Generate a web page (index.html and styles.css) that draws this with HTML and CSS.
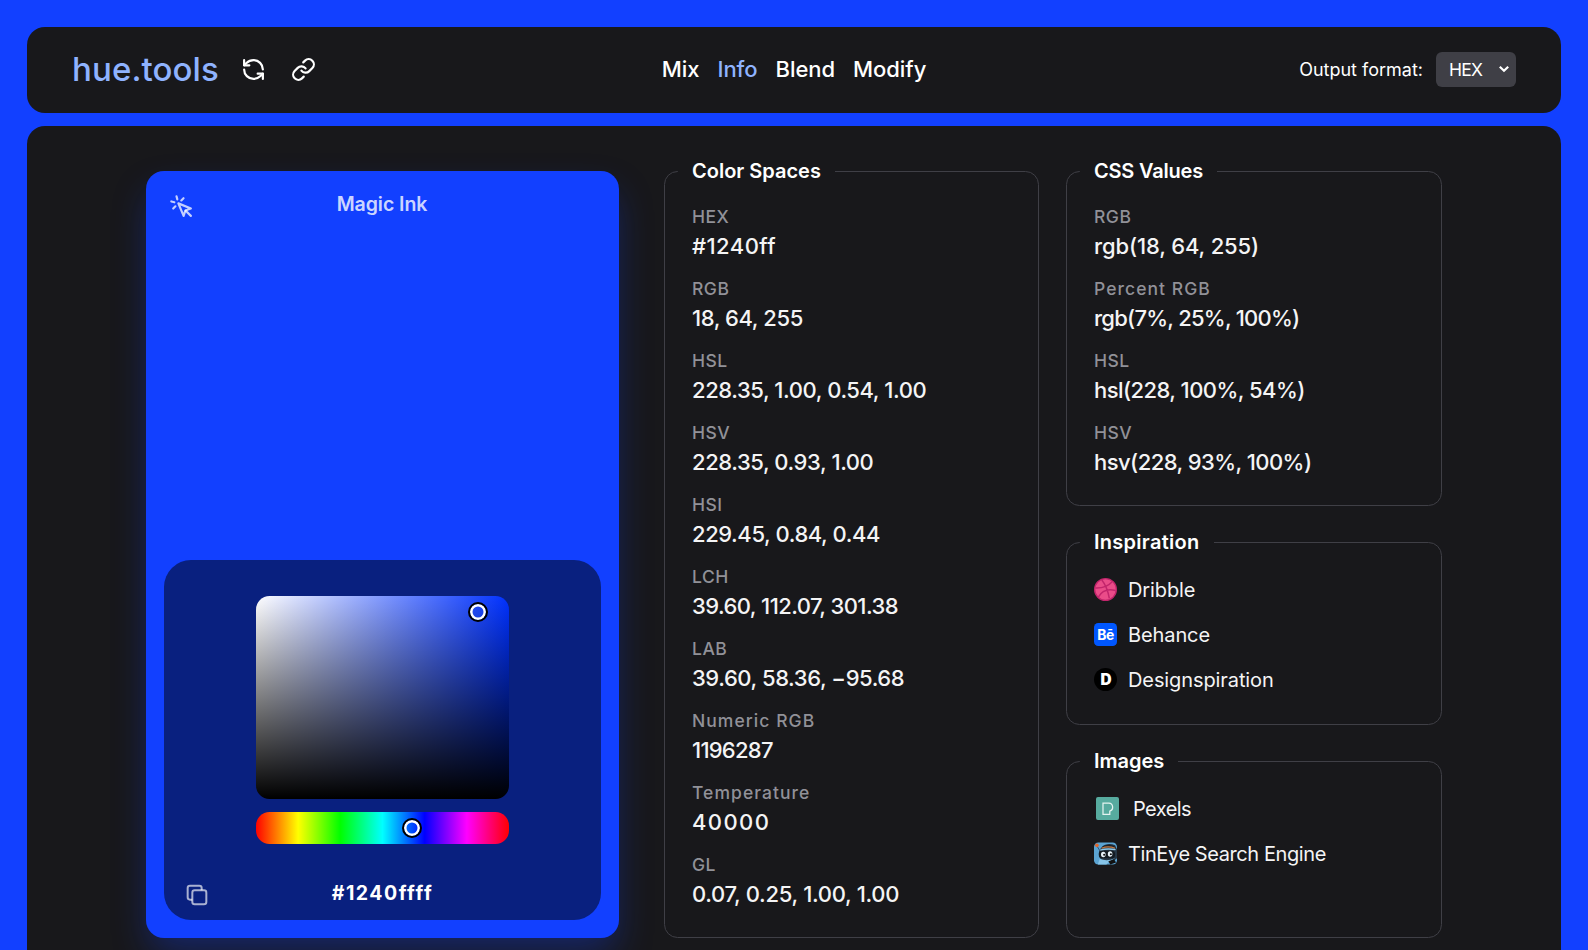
FILE: index.html
```html
<!DOCTYPE html>
<html lang="en">
<head>
    <meta charset="UTF-8">
    <meta name="viewport" content="width=device-width, initial-scale=1.0">
    <title>hue.tools - Info</title>
    <link rel="stylesheet" href="styles.css">
</head>
<body>

    <header class="topbar">
        <div class="brand">
            <a class="logo">hue.tools</a>
            <svg class="icon" viewBox="0 0 24 24"><path d="M21 12a9 9 0 0 0-9-9 9.75 9.75 0 0 0-6.74 2.74L3 8"/><path d="M3 3v5h5"/><path d="M3 12a9 9 0 0 0 9 9 9.75 9.75 0 0 0 6.74-2.74L21 16"/><path d="M16 16h5v5"/></svg>
            <svg class="icon" viewBox="0 0 24 24"><path d="M10 13a5 5 0 0 0 7.54.54l3-3a5 5 0 0 0-7.07-7.07l-1.72 1.71"/><path d="M14 11a5 5 0 0 0-7.54-.54l-3 3a5 5 0 0 0 7.07 7.07l1.71-1.71"/></svg>
        </div>
        <nav class="menu">
            <a>Mix</a>
            <a class="active">Info</a>
            <a>Blend</a>
            <a>Modify</a>
        </nav>
        <div class="format">
            <label for="format">Output format:</label>
            <div class="select">
                <select id="format">
                    <option>HEX</option>
                    <option>RGB</option>
                    <option>HSL</option>
                </select>
                <svg viewBox="0 0 12 8"><path d="M1.8 1.8 6 5.8l4.2-4"/></svg>
            </div>
        </div>
    </header>

    <main class="page">
        <section class="swatch">
            <div class="swatch-head">
                <svg class="icon pick" viewBox="0 0 24 24"><path d="m9 9 5 12 1.77-5.23L21 14z"/><path d="m16.07 16.07 4.93 4.93"/><path d="m7.19 2.24.78 2.9"/><path d="m5.14 7.97-2.9-.78"/><path d="m13.95 4.05-2.12 2.12"/><path d="m6.17 11.83-2.12 2.12"/></svg>
                <span>Magic Ink</span>
            </div>
            <div class="picker">
                <div class="shade"><i class="handle"></i></div>
                <div class="hue"><i class="handle"></i></div>
                <div class="picker-foot">
                    <svg class="copy" viewBox="0 0 24 24"><rect x="8" y="8" width="12" height="12" rx="2"/><path d="M16 8V6a2 2 0 0 0-2-2H6a2 2 0 0 0-2 2v8a2 2 0 0 0 2 2h2"/></svg>
                    <span>#1240ffff</span>
                </div>
            </div>
        </section>

        <fieldset class="spaces">
            <legend>Color Spaces</legend>
            <dl>
                <dt>HEX</dt><dd class="wide">#1240ff</dd>
                <dt>RGB</dt><dd>18, 64, 255</dd>
                <dt>HSL</dt><dd>228.35, 1.00, 0.54, 1.00</dd>
                <dt>HSV</dt><dd>228.35, 0.93, 1.00</dd>
                <dt>HSI</dt><dd>229.45, 0.84, 0.44</dd>
                <dt>LCH</dt><dd class="tight">39.60, 112.07, 301.38</dd>
                <dt>LAB</dt><dd>39.60, 58.36, −95.68</dd>
                <dt class="long">Numeric RGB</dt><dd class="tighter">1196287</dd>
                <dt class="long">Temperature</dt><dd class="wider">40000</dd>
                <dt>GL</dt><dd class="gl">0.07, 0.25, 1.00, 1.00</dd>
            </dl>
        </fieldset>

        <div class="side">
            <fieldset>
                <legend class="css-title">CSS Values</legend>
                <dl>
                    <dt>RGB</dt><dd class="rgb">rgb(18, 64, 255)</dd>
                    <dt class="long">Percent RGB</dt><dd class="tighter">rgb(7%, 25%, 100%)</dd>
                    <dt>HSL</dt><dd class="tight">hsl(228, 100%, 54%)</dd>
                    <dt>HSV</dt><dd class="tight">hsv(228, 93%, 100%)</dd>
                </dl>
            </fieldset>

            <fieldset>
                <legend class="insp-title">Inspiration</legend>
                <ul>
                    <li>
                        <svg viewBox="0 0 24 24"><circle cx="12" cy="12" r="11.3" fill="#ea4c89" stroke="#c2256c" stroke-width="1.4"/><path d="M8 1.8c4 5 6.5 11 8 19.5M1.5 10.5c7 .3 13-1.5 17.5-6.5M4.5 20c3.5-6.500 10-9 18-7" fill="none" stroke="#c2256c" stroke-width="1.5"/></svg>
                        <span>Dribble</span>
                    </li>
                    <li>
                        <svg viewBox="0 0 24 24"><rect width="24" height="24" rx="4.5" fill="#0057ff"/><text x="12" y="17.8" text-anchor="middle" class="be">Bē</text></svg>
                        <span>Behance</span>
                    </li>
                    <li>
                        <svg viewBox="0 0 24 24"><circle cx="12" cy="12" r="12" fill="#000"/><text x="12.5" y="17.8" text-anchor="middle" class="dee">D</text></svg>
                        <span>Designspiration</span>
                    </li>
                </ul>
            </fieldset>

            <fieldset class="images">
                <legend>Images</legend>
                <ul>
                    <li class="pexels">
                        <svg viewBox="0 0 24 24"><rect width="24" height="24" rx="2" fill="#57ab9f"/><path d="M7.3 6.500h6.200a4.200 4.200 0 0 1 .9 8.200v3.400H7.300z" fill="none" stroke="#e4f3f0" stroke-width="1.300"/></svg>
                        <span>Pexels</span>
                    </li>
                    <li class="tineye">
                        <svg viewBox="0 0 24 24">
                            <rect y=".5" width="24" height="23" rx="4.5" fill="#5ba4d3"/>
                            <path d="M8 5.5C11 2 17 1 22 3.500l2 4V17l-4 3H9C4 16 4 9 8 5.500z" fill="#263746"/>
                            <path d="M8 5.5c3-3 9-3.500 13-1l2 2c-5-1.500-10-1.500-15-1z" fill="#17212b"/>
                            <path d="M8 6.500c4-1.800 9-2 14 0" fill="none" stroke="#c9793f" stroke-width="1.200"/>
                            <path d="M6.500 8.500c5-1.500 11-1.500 16-.5" fill="none" stroke="#8fc8e8" stroke-width="1.500"/>
                            <rect x="5" y="9" width="17" height="8" rx="3.500" fill="#131b22"/>
                            <ellipse cx="9.700" cy="13" rx="2.400" ry="2.900" fill="#e7f2f8"/><ellipse cx="16.800" cy="12.500" rx="2.400" ry="2.900" fill="#e7f2f8"/>
                            <circle cx="10.600" cy="13.300" r="1.100" fill="#111"/><circle cx="17.600" cy="12.800" r="1.100" fill="#111"/>
                            <path d="M6 17.500c5 2 10 2 16-.5L15 21l-2 2.500H4z" fill="#86c4e8"/>
                            <path d="m15 20 6-2 2 3.500-6 2z" fill="#111"/>
                            <path d="m3 4 3 5" stroke="#36506a" stroke-width="1"/><circle cx="3" cy="3.500" r="1.900" fill="#e2672c"/>
                        </svg>
                        <span>TinEye Search Engine</span>
                    </li>
                </ul>
            </fieldset>
        </div>
    </main>

</body>
</html>
```
FILE: styles.css
```css
* { box-sizing: border-box; margin: 0; padding: 0; }
body { height: 950px; padding: 27px 27px 0; overflow: hidden; background: #1240ff; color: white; font-family: Inter, sans-serif; }

.topbar { display: grid; grid-template-columns: 1fr auto 1fr; align-items: center; height: 86px; padding: 0 45px 2px; background: #18181b; border-radius: 18px; }
.brand { display: flex; align-items: center; }
.logo { width: 169px; font-size: 33px; font-weight: 450; letter-spacing: 0.1px; line-height: 45px; color: #8fb3ff; }
.icon { width: 25px; height: 25px; fill: none; stroke: white; stroke-width: 2.1; stroke-linecap: round; stroke-linejoin: round; }
.brand .icon + .icon { margin-left: 25px; }
.menu { display: flex; gap: 18px; font-size: 22px; font-weight: 500; letter-spacing: -0.05px; }
.menu .active { color: #8fb3ff; }
.format { display: flex; justify-content: flex-end; align-items: center; gap: 13px; font-size: 18px; }
.select { position: relative; width: 80px; height: 35px; }
.select select { width: 100%; height: 100%; padding-left: 13px; appearance: none; border: none; border-radius: 6px; background: #3f3f46; color: white; font: 400 17.5px Inter, sans-serif; letter-spacing: -0.8px; }
.select svg { position: absolute; right: 6px; top: 13px; width: 12px; height: 8px; fill: none; stroke: white; stroke-width: 2.2; pointer-events: none; }

.page { display: grid; grid-template-columns: 491px 375px 376px; column-gap: 27px; justify-content: center; height: 840px; margin-top: 13px; padding-top: 45px; background: #18181b; border-radius: 18px 18px 0 0; }
.swatch { display: flex; flex-direction: column; justify-content: space-between; width: 473px; height: 767px; padding: 18px; background: #1240ff; border-radius: 18px; box-shadow: 0 18px 36px -4px rgba(18, 64, 255, 0.34); }
.swatch-head { display: grid; grid-template-columns: 40px 1fr 40px; align-items: center; height: 30px; padding-left: 5px; font-size: 19.5px; font-weight: 600; letter-spacing: -0.05px; color: rgba(255, 255, 255, 0.8); }
.swatch-head span { text-align: center; margin-left: -6px; }
.swatch-head .pick { margin-top: 5px; stroke: rgba(255, 255, 255, 0.75); }

.picker { display: flex; flex-direction: column; align-items: center; width: 437px; height: 360px; padding-top: 36px; background: #09207f; border-radius: 27px; }
.shade { position: relative; width: 253px; height: 203px; border-radius: 13.5px; background: linear-gradient(to top, #000, transparent), linear-gradient(to right, #fff, #0031ff); }
.hue { position: relative; width: 253px; height: 32px; margin-top: 13px; border-radius: 13.5px; background: linear-gradient(to right, #f00, #ff0, #0f0, #0ff, #00f, #f0f, #f00); }
.handle { position: absolute; width: 20px; height: 20px; border: 2px solid #000; border-radius: 50%; box-shadow: inset 0 0 0 2.5px white; }
.shade .handle { left: 212px; top: 6px; }
.hue .handle { left: 146px; top: 6px; }
.picker-foot { display: grid; grid-template-columns: 28px 1fr 28px; align-items: center; width: 100%; margin-top: 33px; padding: 0 19px; font-size: 19.5px; font-weight: 700; letter-spacing: 1.5px; }
.picker-foot span { text-align: center; }
.copy { width: 28px; height: 28px; margin-top: 4px; fill: none; stroke: rgba(255, 255, 255, 0.65); stroke-width: 1.7; }

fieldset { min-width: 0; padding: 18px 27px 0; border: 1px solid #3f3f46; border-radius: 13.5px; }
legend { margin-left: -14px; padding: 0 14px; font-size: 20px; font-weight: 600; line-height: 27px; }
.css-title { letter-spacing: -0.2px; }
.insp-title { letter-spacing: 0.28px; }
.spaces { height: 780px; margin-top: -13px; }
dt { font-size: 17.5px; font-weight: 500; line-height: 27px; letter-spacing: 0.5px; color: #919198; }
dt.long { letter-spacing: 1.05px; }
dd { margin-bottom: 13px; font-size: 22px; font-weight: 500; line-height: 32px; letter-spacing: -0.42px; color: #f4f4f5; }
dd.rgb { letter-spacing: -0.12px; }
dd.gl { letter-spacing: -0.3px; }
dd.wide { letter-spacing: 0.45px; }
dd.wider { letter-spacing: 1.4px; }
dd.tight { letter-spacing: -0.55px; }
dd.tighter { letter-spacing: -0.75px; }

.side { display: flex; flex-direction: column; height: 780px; margin-top: -13px; }
.side fieldset { height: 348px; margin-bottom: 23px; }
.side fieldset + fieldset { height: 196px; padding-top: 11px; }
.side .images { height: auto; flex: 1; margin-bottom: 0; }
ul { list-style: none; }
li { display: flex; align-items: center; gap: 11px; height: 45px; font-size: 20px; letter-spacing: -0.1px; color: #f4f4f5; }
li svg { width: 23px; height: 23px; }
.pexels { gap: 14px; padding-left: 2px; letter-spacing: -0.55px; }
.tineye { letter-spacing: -0.41px; }
.be { font: 700 14.5px Inter, sans-serif; letter-spacing: -0.6px; fill: white; }
.dee { font: 900 16px Inter, sans-serif; fill: white; }
```
